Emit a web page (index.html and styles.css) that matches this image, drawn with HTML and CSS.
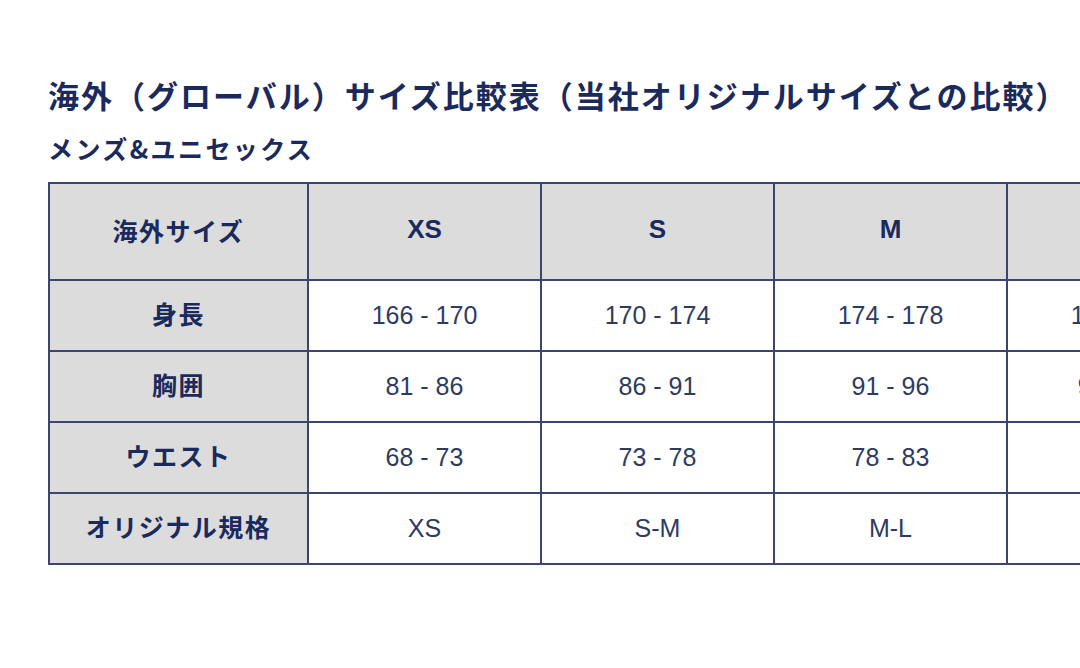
FILE: index.html
```html
<!DOCTYPE html>
<html lang="ja">
<head>
<meta charset="utf-8">
<title>海外サイズ比較表</title>
<link rel="stylesheet" href="styles.css">
</head>
<body>
<main class="page">
  <h1 class="title">海外（グローバル）サイズ比較表（当社オリジナルサイズとの比較）</h1>
  <h2 class="subtitle">メンズ&amp;ユニセックス</h2>
  <table class="size-table">
    <thead>
      <tr>
        <th class="label">海外サイズ</th>
        <th>XS</th>
        <th>S</th>
        <th>M</th>
        <th>L</th>
      </tr>
    </thead>
    <tbody>
      <tr>
        <th class="label">身長</th>
        <td>166 - 170</td>
        <td>170 - 174</td>
        <td>174 - 178</td>
        <td>178 - 182</td>
      </tr>
      <tr>
        <th class="label">胸囲</th>
        <td>81 - 86</td>
        <td>86 - 91</td>
        <td>91 - 96</td>
        <td>96 - 101</td>
      </tr>
      <tr>
        <th class="label">ウエスト</th>
        <td>68 - 73</td>
        <td>73 - 78</td>
        <td>78 - 83</td>
        <td>83 - 88</td>
      </tr>
      <tr>
        <th class="label">オリジナル規格</th>
        <td>XS</td>
        <td>S-M</td>
        <td>M-L</td>
        <td>L-XL</td>
      </tr>
    </tbody>
  </table>
</main>
</body>
</html>
```

FILE: styles.css
```css
html, body {
  margin: 0;
  padding: 0;
  background: #ffffff;
  overflow: hidden;
}

body {
  width: 1080px;
  height: 668px;
}

.page {
  padding: 75px 0 0 48px;
  width: 1400px;
  color: #1c2b5e;
  font-family: "Noto Sans CJK JP", "Noto Sans", sans-serif;
}

.title {
  margin: 0;
  font-size: 31px;
  line-height: 40px;
  font-weight: 700;
  letter-spacing: 2px;
  white-space: nowrap;
  color: #1a2a5c;
}

.subtitle {
  margin: 17px 0 0 0;
  font-size: 25px;
  line-height: 32px;
  font-weight: 700;
  letter-spacing: 2.4px;
  color: #1a2a5c;
}

.size-table {
  margin-top: 18px;
  border-collapse: collapse;
  table-layout: fixed;
}

.size-table th,
.size-table td {
  border: 2px solid #3a4670;
  text-align: center;
  vertical-align: middle;
  padding: 0;
  width: 231px;
}

.size-table thead tr {
  height: 97px;
}

.size-table thead th {
  padding-bottom: 4px;
  background: #dcdcdc;
  font-family: "Liberation Sans", "Noto Sans CJK JP", sans-serif;
  font-weight: 700;
  font-size: 26px;
  color: #1a2a5c;
}

.size-table tbody tr {
  height: 71px;
}

.size-table th.label {
  width: 257px;
  background: #dcdcdc;
  font-family: "Noto Sans CJK JP", sans-serif;
  font-weight: 700;
  font-size: 25px;
  letter-spacing: 1.5px;
  color: #1a2a5c;
}

.size-table tbody th.label {
  padding-bottom: 6px;
}

.size-table td {
  background: #ffffff;
  font-family: "Liberation Sans", "Noto Sans", sans-serif;
  font-size: 25px;
  font-weight: 400;
  color: #2e3b60;
}
```
